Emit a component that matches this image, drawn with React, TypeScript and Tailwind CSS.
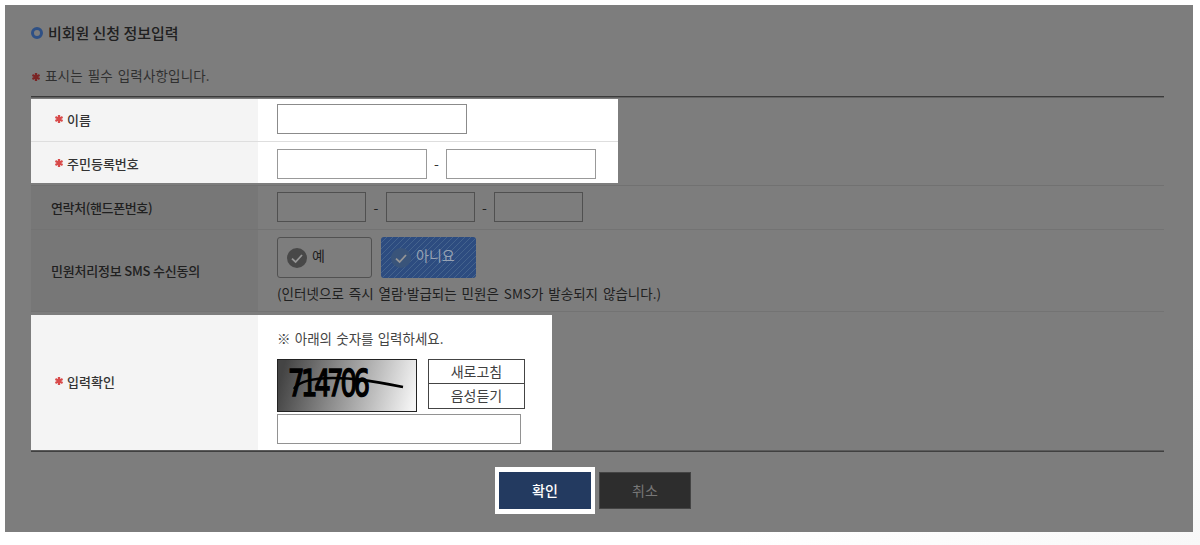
import type { ReactNode } from "react";

function Star({ className = "" }: { className?: string }) {
  return (
    <svg viewBox="0 0 8 8" className={`h-2 w-2 shrink-0 ${className}`} fill="none" stroke="currentColor" strokeWidth="2.3">
      <path d="M4 0V8M0.4 2L7.6 6M0.4 6L7.6 2" />
    </svg>
  );
}

function Label({ children, required, className = "" }: { children: ReactNode; required?: boolean; className?: string }) {
  return (
    <div className={`flex w-[227px] shrink-0 items-center whitespace-nowrap text-[13px] font-medium ${className}`}>
      {required && <Star className="mr-[4px] ml-[24px] text-[#d84a4a]" />}
      {children}
    </div>
  );
}

function Field({ className }: { className: string }) {
  return <input type="text" className={`block h-[30px] shrink-0 border bg-transparent outline-none ${className}`} />;
}

function Check({ className }: { className: string }) {
  return (
    <svg viewBox="0 0 20 20" className="h-5 w-5 shrink-0" fill="none">
      <circle cx="10" cy="10" r="10" className={className} fill="currentColor" />
      <path d="M5 10.6L8.6 14L15 7" stroke="#969696" strokeWidth="1.8" />
    </svg>
  );
}

function Stripes() {
  return (
    <svg className="absolute inset-0 h-full w-full" aria-hidden="true">
      <defs>
        <pattern id="stripes" width="6" height="6" patternUnits="userSpaceOnUse">
          <path d="M-1 1L1 -1M0 6L6 0M5 7L7 5" stroke="#46658f" strokeWidth="0.9" />
        </pattern>
      </defs>
      <rect width="100%" height="100%" fill="url(#stripes)" />
    </svg>
  );
}

export default function App() {
  return (
    <div className="h-[545px] w-[1200px] bg-linear-to-br from-white from-80% to-[#f8f8f8] pt-[5px] pl-[5px] font-['Noto_Sans_CJK_KR','Noto_Sans',sans-serif] leading-none">
      <main className="h-[527px] w-[1188px] bg-[#7d7d7d] pr-[29px] pl-[26px]">
        <header className="flex h-[56px] items-center">
          <span className="mr-[5px] h-3 w-3 rounded-full border-[3px] border-[#2e5085]" />
          <h1 className="-translate-y-px text-[15px] font-medium tracking-[-0.05px] text-[#202020]">비회원 신청 정보입력</h1>
        </header>
        <p className="flex h-[35px] items-start pt-[8px] text-[13.5px] tracking-[0.15px] text-[#303030] [word-spacing:1.8px]">
          <Star className="mt-[4px] mr-[5px] ml-px text-[#7b2525]" />
          표시는 필수 입력사항입니다.
        </p>
        <form>
          <section className="border-t border-[#3a3a3a]">
            <div className="border-t border-[#626262] pt-px">
              <div className="h-[84px] w-[587px] bg-white text-[#333]">
                <div className="flex h-[43px] border-b border-[#dedede]">
                  <Label required className="bg-[#f4f4f4] pb-[2px]">이름</Label>
                  <div className="flex items-start pt-[5px] pl-[19px]">
                    <Field className="w-[190px] border-[#8b8b8b]" />
                  </div>
                </div>
                <div className="flex h-[41px]">
                  <Label required className="bg-[#f4f4f4] pt-px">주민등록번호</Label>
                  <div className="flex items-start pt-[7px] pl-[19px]">
                    <Field className="w-[150px] border-[#999]" />
                    <span className="w-[19px] pt-[7px] text-center text-[14px]">-</span>
                    <Field className="w-[150px] border-[#999]" />
                  </div>
                </div>
              </div>
            </div>
            <div className="h-[3px] border-b border-[#717171]" />
            <div className="flex h-[44px] border-b border-[#737373] text-[#202020]">
              <Label className="bg-[#777] pl-[20px] tracking-[-0.38px]">연락처(핸드폰번호)</Label>
              <div className="flex items-start pt-[6px] pl-[19px]">
                <Field className="w-[89px] border-[#505050]" />
                <span className="w-[20px] pt-[8px] text-center text-[14px]">-</span>
                <Field className="w-[89px] border-[#505050]" />
                <span className="w-[19px] pt-[8px] text-center text-[14px]">-</span>
                <Field className="w-[89px] border-[#505050]" />
              </div>
            </div>
            <div className="flex h-[82px] border-b border-[#737373] text-[#202020]">
              <Label className="bg-[#777] pl-[20px] tracking-[-0.2px]">민원처리정보 SMS 수신동의</Label>
              <div className="pt-[7px] pl-[19px]">
                <div className="flex gap-[9px] text-[14px]">
                  <button type="button" className="flex h-[41px] w-[95px] items-center rounded-[3px] border border-[#515151] pl-[9px]">
                    <Check className="text-[#484848]" />
                    <span className="ml-[5px] -translate-y-[3px]">예</span>
                  </button>
                  <button type="button" className="relative flex h-[41px] w-[95px] items-center overflow-hidden rounded-[3px] bg-[#2d4c80] pl-[10px] text-[#98a3b4]">
                    <Stripes />
                    <span className="relative flex items-center">
                      <Check className="text-[#39547a]" />
                      <span className="ml-[5px] -translate-y-[3px]">아니요</span>
                    </span>
                  </button>
                </div>
                <p className="mt-[9px] whitespace-nowrap text-[13.5px] tracking-[0.03px] [word-spacing:1.8px]">
                  (인터넷으로 즉시 열람<span className="-mx-[2px]">·</span>발급되는 민원은 SMS가 발송되지 않습니다.)
                </p>
              </div>
            </div>
            <div className="flex items-end">
              <div className="mt-[3px] flex h-[135px] w-[521px] bg-white text-[#333]">
                <Label required className="bg-[#f4f4f4] pb-[3px]">입력확인</Label>
                <div className="pt-[17px] pl-[19px]">
                  <p className="whitespace-nowrap text-[13.5px] leading-[13px] text-[#444] [word-spacing:1.2px]">※ 아래의 숫자를 입력하세요.</p>
                  <div className="mt-[14px] flex gap-[11px]">
                    <div className="relative flex h-[53px] w-[140px] items-start border border-[#222] bg-linear-[105deg,#444_5%,#888_40%,#c0c0c0_70%,#f5f5f5_97%]">
                      <span className="mt-[2px] ml-[10px] origin-left scale-x-[0.68] font-['DejaVu_Sans'] text-[38px] leading-[42px] tracking-[-4.9px] text-black [-webkit-text-stroke:1.6px_black]">714706</span>
                      <svg className="absolute inset-0 h-[51px] w-[138px]" fill="none" stroke="black" strokeWidth="2.6">
                        <path d="M16 29C22 20 40 18 55 18C75 18 90 20 125 27" />
                      </svg>
                    </div>
                    <div className="w-[97px] text-center text-[14px] text-[#404040]">
                      <button type="button" className="flex h-[25px] w-full items-center justify-center border border-[#444] pb-[2px]">새로고침</button>
                      <button type="button" className="flex h-[25px] w-full items-center justify-center border border-t-0 border-[#444] pb-[2px]">음성듣기</button>
                    </div>
                  </div>
                  <Field className="mt-[2px] w-[244px] border-[#929292]" />
                </div>
              </div>
            </div>
            <div className="h-[2px] border-t border-b border-t-[#5b5b5b] border-b-[#404040]" />
          </section>
          <footer className="flex h-[80px] items-start gap-[4px] pt-[15px] pl-[464px] text-[14px] font-medium">
            <div className="bg-white px-[4px] py-[5px]">
              <button type="submit" className="flex h-[37px] w-[92px] items-center justify-center bg-[#233a60] pb-[2px] text-white">확인</button>
            </div>
            <button type="button" className="mt-[5px] flex h-[37px] w-[92px] items-center justify-center border border-[#444] bg-[#2d2d2d] pb-[2px] font-normal text-[#777]">취소</button>
          </footer>
        </form>
      </main>
    </div>
  );
}
